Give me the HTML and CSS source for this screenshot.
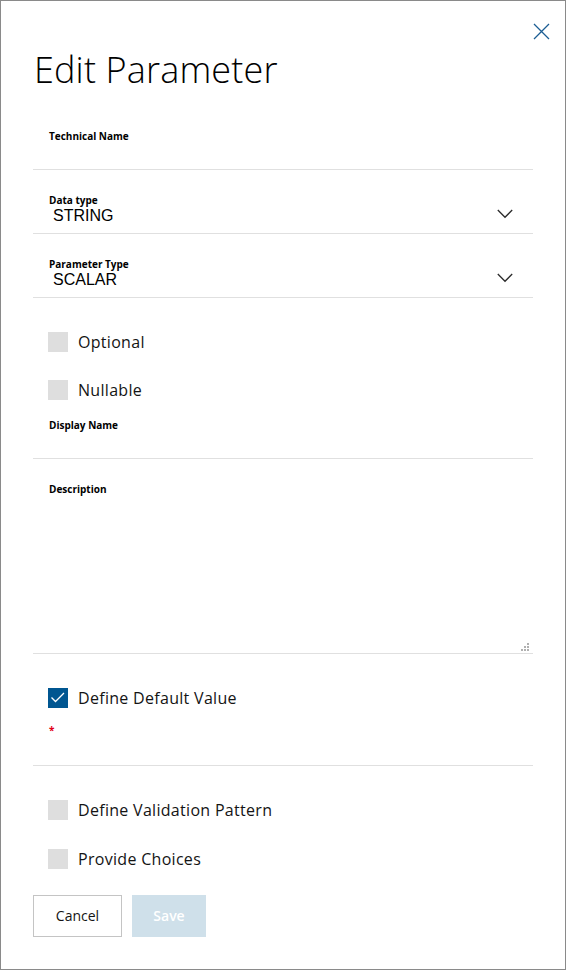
FILE: index.html
```html
<!DOCTYPE html>
<html lang="en">
<head>
<meta charset="utf-8">
<title>Edit Parameter</title>
<link rel="stylesheet" href="styles.css">
</head>
<body>
<div class="dialog">
  <button class="close" aria-label="Close">
    <svg width="17" height="17" viewBox="0 0 17 17"><path d="M1 1 L16 16 M16 1 L1 16" stroke="#1b5d93" stroke-width="1.3" fill="none"/></svg>
  </button>
  <h1 class="title">Edit Parameter</h1>

  <div class="field">
    <div class="label">Technical Name</div>
    <div class="value"></div>
  </div>

  <div class="field">
    <div class="label">Data type</div>
    <div class="value select">
      <span>STRING</span>
      <svg class="chevron" width="16" height="10" viewBox="0 0 16 10"><path d="M0.8 1 L8 8.3 L15.2 1" stroke="#2b2b2b" stroke-width="1.3" fill="none"/></svg>
    </div>
  </div>

  <div class="field">
    <div class="label">Parameter Type</div>
    <div class="value select">
      <span>SCALAR</span>
      <svg class="chevron" width="16" height="10" viewBox="0 0 16 10"><path d="M0.8 1 L8 8.3 L15.2 1" stroke="#2b2b2b" stroke-width="1.3" fill="none"/></svg>
    </div>
  </div>

  <div class="check first"><span class="box"></span><span class="check-label">Optional</span></div>
  <div class="check"><span class="box"></span><span class="check-label">Nullable</span></div>

  <div class="field tight">
    <div class="label">Display Name</div>
    <div class="value"></div>
  </div>

  <div class="field area">
    <div class="label">Description</div>
    <div class="textarea">
      <svg class="grip" width="9" height="9" viewBox="0 0 9 9">
        <rect x="6" y="0" width="2" height="2" fill="#b0b0b0"/>
        <rect x="3" y="3" width="2" height="2" fill="#b0b0b0"/>
        <rect x="6" y="3" width="2" height="2" fill="#b0b0b0"/>
        <rect x="0" y="6" width="2" height="2" fill="#b0b0b0"/>
        <rect x="3" y="6" width="2" height="2" fill="#b0b0b0"/>
        <rect x="6" y="6" width="2" height="2" fill="#b0b0b0"/>
      </svg>
    </div>
  </div>

  <div class="check first"><span class="box checked"><svg width="20" height="20" viewBox="0 0 20 20"><path d="M3.5 9.5 L7.5 13.5 L16 5" stroke="#ffffff" stroke-width="1.3" fill="none"/></svg></span><span class="check-label">Define Default Value</span></div>

  <div class="field required">
    <div class="label"><span class="star">*</span></div>
    <div class="value"></div>
  </div>

  <div class="check first"><span class="box"></span><span class="check-label">Define Validation Pattern</span></div>
  <div class="check wide"><span class="box"></span><span class="check-label">Provide Choices</span></div>

  <div class="actions">
    <button class="btn cancel">Cancel</button>
    <button class="btn save" disabled>Save</button>
  </div>
</div>
</body>
</html>
```

FILE: styles.css
```css
html, body {
  margin: 0;
  padding: 0;
  background: #ffffff;
}

body {
  font-family: "Open Sans", "Noto Sans", "Liberation Sans", sans-serif;
  color: #1a1a1a;
}

.dialog {
  position: relative;
  box-sizing: border-box;
  width: 566px;
  height: 970px;
  border: 1px solid #8a8a8a;
  padding: 0 32px;
}

.close {
  position: absolute;
  top: 22px;
  right: 15px;
  width: 17px;
  height: 17px;
  padding: 0;
  margin: 0;
  border: 0;
  background: transparent;
  display: block;
  cursor: pointer;
}

.close svg {
  display: block;
}

.title {
  margin: 47px 0 14px 1px;
  font-size: 36px;
  line-height: 44px;
  font-weight: 300;
  color: #000000;
  letter-spacing: 0.15px;
}

.field {
  padding-top: 23px;
  padding-bottom: 8px;
  border-bottom: 1px solid #e0e0e0;
}

.field.tight {
  padding-top: 18px;
}

.field.required {
  padding-top: 15px;
  padding-bottom: 10px;
}

.label {
  margin-left: 16px;
  font-size: 10px;
  line-height: 14px;
  height: 14px;
  font-weight: 700;
  color: #000000;
}

.star {
  color: #e20015;
}

.value {
  height: 18px;
  margin-left: 20px;
  font-family: "Liberation Sans", Arial, sans-serif;
  font-size: 16px;
  line-height: 18px;
  color: #000000;
}

.select {
  display: flex;
  justify-content: space-between;
  align-items: flex-start;
}

.chevron {
  display: block;
  margin-top: 2px;
  margin-right: 20px;
}

.field.area {
  padding-bottom: 0;
}

.textarea {
  position: relative;
  height: 157px;
}

.grip {
  position: absolute;
  right: 3px;
  bottom: 1px;
  display: block;
}

.check {
  display: flex;
  align-items: center;
  height: 20px;
  margin-top: 28px;
  margin-left: 15px;
}

.check.first {
  margin-top: 34px;
}

.check.wide {
  margin-top: 29px;
}

.box {
  width: 20px;
  height: 20px;
  background: #dedede;
  flex: 0 0 auto;
  display: block;
}

.box.checked {
  background: #005691;
}

.box svg {
  display: block;
}

.check-label {
  margin-left: 10px;
  font-size: 16px;
  line-height: 20px;
  letter-spacing: 0.3px;
  color: #141414;
}

.actions {
  display: flex;
  gap: 10px;
  margin-top: 26px;
}

.btn {
  height: 42px;
  margin: 0;
  font-family: "Open Sans", "Noto Sans", "Liberation Sans", sans-serif;
  font-size: 14px;
  line-height: 20px;
  padding: 0;
  box-sizing: border-box;
}

.cancel {
  width: 89px;
  background: #ffffff;
  border: 1px solid #c4c4c4;
  color: #141414;
}

.save {
  width: 74px;
  background: #cfe0ea;
  border: 0;
  color: #ffffff;
  font-weight: 600;
}
```
